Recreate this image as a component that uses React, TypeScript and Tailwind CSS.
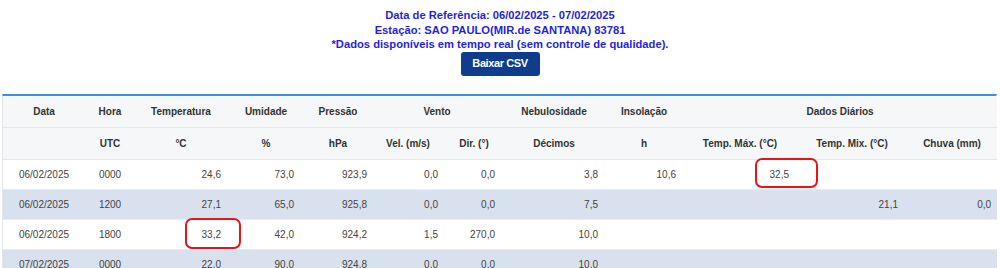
import React from "react";

const rows = [
  ["06/02/2025", "0000", "24,6", "73,0", "923,9", "0,0", "0,0", "3,8", "10,6", "32,5", "", ""],
  ["06/02/2025", "1200", "27,1", "65,0", "925,8", "0,0", "0,0", "7,5", "", "", "21,1", "0,0"],
  ["06/02/2025", "1800", "33,2", "42,0", "924,2", "1,5", "270,0", "10,0", "", "", "", ""],
  ["07/02/2025", "0000", "22,0", "90,0", "924,8", "0,0", "0,0", "10,0", "", "", "", ""],
];

const widths = ["w-[82px]", "w-[50px]", "w-[92px]", "w-[78px]", "w-[66px]", "w-[74px]", "w-[58px]", "w-[102px]", "w-[78px]", "w-[114px]", "w-[110px]", "w-[90px]"];
const pads = ["", "", "pr-[6px]", "pr-[11px]", "pr-[4px]", "pr-[7px]", "pr-[8px]", "pr-[7px]", "pr-[7px]", "pr-[8px]", "pr-[9px]", "pr-[6px]"];

function App() {
  return (
    <div className="relative w-[1000px] h-[268px] overflow-hidden bg-white font-['Liberation_Sans',Arial,sans-serif]">
      <div className="pt-[8px] flex flex-col items-center text-[#1f1fe6] font-bold text-[11.2px] leading-[14.5px]">
        <div>Data de Referência: 06/02/2025 - 07/02/2025</div>
        <div>Estação: SAO PAULO(MIR.de SANTANA) 83781</div>
        <div>*Dados disponíveis em tempo real (sem controle de qualidade).</div>
        <button className="mt-[0px] w-[79px] h-[24px] rounded-[3px] bg-[#0e3d8e] text-white text-[11px] font-bold tracking-[-0.4px]">
          Baixar CSV
        </button>
      </div>

      <div className="mt-[18px] ml-[2px] w-[995px] border-t-2 border-[#3d8fe6] border-x border-x-[#e3e6ea]">
        <table className="table-fixed border-collapse w-[994px] text-[10px] text-[#444]">
          <colgroup>
            {widths.map((w, i) => (
              <col key={i} className={w} />
            ))}
          </colgroup>
          <thead className="bg-[#f6f7f9] text-[#333] font-bold">
            <tr className="h-[32px] border-b border-[#e4e7eb]">
              <th>Data</th>
              <th>Hora</th>
              <th>Temperatura</th>
              <th>Umidade</th>
              <th>Pressão</th>
              <th colSpan={2}>Vento</th>
              <th>Nebulosidade</th>
              <th>Insolação</th>
              <th colSpan={3}>Dados Diários</th>
            </tr>
            <tr className="h-[32px] border-b border-[#e4e7eb]">
              <th></th>
              <th>UTC</th>
              <th>°C</th>
              <th>%</th>
              <th>hPa</th>
              <th>Vel. (m/s)</th>
              <th>Dir. (°)</th>
              <th>Décimos</th>
              <th>h</th>
              <th>Temp. Máx. (°C)</th>
              <th>Temp. Mix. (°C)</th>
              <th>Chuva (mm)</th>
            </tr>
          </thead>
          <tbody>
            {rows.map((r, i) => (
              <tr key={i} className={"h-[30px] border-b border-[#e8ebef] " + (i % 2 === 1 ? "bg-[#d9e1ee]" : "bg-white")}>
                {r.map((c, j) => (
                  <td key={j} className={j < 2 ? "text-center" : "text-right " + pads[j]}>
                    {c}
                  </td>
                ))}
              </tr>
            ))}
          </tbody>
        </table>
      </div>

      <div className="absolute left-[755px] top-[158px] w-[63px] h-[30px] border-2 border-[#e8141b] rounded-[7px]"></div>
      <div className="absolute left-[185px] top-[218px] w-[56px] h-[31px] border-2 border-[#e8141b] rounded-[7px]"></div>
    </div>
  );
}

export default App;
